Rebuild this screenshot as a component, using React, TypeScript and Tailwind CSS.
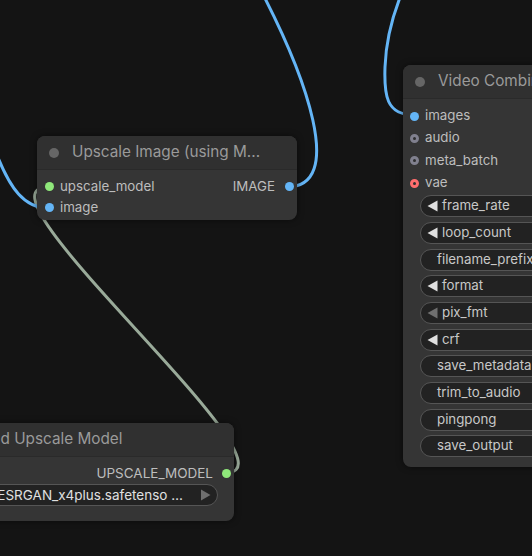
import React from "react";

type Slot = { name: string; color: string; hollow?: boolean };

const Dot: React.FC<{ color: string; hollow?: boolean }> = ({ color, hollow }) =>
  hollow ? (
    <span
      className="block w-[9px] h-[9px] rounded-full border-[3px] bg-[#2e2e30]"
      style={{ borderColor: color }}
    />
  ) : (
    <span className="block w-[9px] h-[9px] rounded-full" style={{ background: color }} />
  );

const Arrow: React.FC<{ dim?: boolean; right?: boolean }> = ({ dim, right }) => (
  <svg width="11" height="12" viewBox="0 0 11 12" className="shrink-0">
    <path
      d={right ? "M1 0.5 L10.5 6 L1 11.5 Z" : "M10.5 0.5 L0.5 6 L10.5 11.5 Z"}
      fill={dim ? "#6f6f6f" : "#e0e0e0"}
    />
  </svg>
);

const Title: React.FC<{ text: string }> = ({ text }) => (
  <div className="h-[34px] flex items-center pl-[12px] gap-[13px] bg-[#303030] border-b border-[#2a2a2a] rounded-t-[8px]">
    <span className="w-[10px] h-[10px] rounded-full bg-[#666] shrink-0" />
    <span className="text-[15.3px] text-[#9a9a9a] whitespace-nowrap">{text}</span>
  </div>
);

const Widget: React.FC<{ label: string; arrow?: "on" | "dim" }> = ({ label, arrow }) => (
  <div
    className={`h-[22px] rounded-full border border-[#555] bg-[#222] flex items-center gap-[4px] text-[13.3px] text-[#c8c8c8] whitespace-nowrap ${
      arrow ? "pl-[6px]" : "pl-[16px]"
    }`}
  >
    {arrow && <Arrow dim={arrow === "dim"} />}
    <span>{label}</span>
  </div>
);

const inputs: Slot[] = [
  { name: "images", color: "#64b5f6" },
  { name: "audio", color: "#80808e", hollow: true },
  { name: "meta_batch", color: "#80808e", hollow: true },
  { name: "vae", color: "#ff6e6e", hollow: true },
];

const widgets: { label: string; arrow?: "on" | "dim" }[] = [
  { label: "frame_rate", arrow: "on" },
  { label: "loop_count", arrow: "on" },
  { label: "filename_prefix" },
  { label: "format", arrow: "on" },
  { label: "pix_fmt", arrow: "dim" },
  { label: "crf", arrow: "on" },
  { label: "save_metadata" },
  { label: "trim_to_audio" },
  { label: "pingpong" },
  { label: "save_output" },
];

export default function App() {
  return (
    <div
      className="relative w-[532px] h-[556px] overflow-hidden bg-[#141414]"
      style={{ fontFamily: "Inter, 'Noto Sans', sans-serif" }}
    >
      {/* links sit under the nodes */}
      <svg className="absolute inset-0" width="532" height="556" fill="none">
        <path d="M225 473 C309 473, -36 187, 48 187" stroke="#99aa99" strokeWidth="3" />
        <path d="M287 187 C345 187, 310 80, 250 -30" stroke="#64b5f6" strokeWidth="3" />
        <path d="M414 115 C386 115, 384 95, 385 67 C386 40, 393 15, 401 -5" stroke="#64b5f6" strokeWidth="3" />
        <path d="M48 208 C25 208, 10 190, -5 150" stroke="#64b5f6" strokeWidth="3" />
      </svg>

      {/* Upscale Image (using Model) */}
      <div className="absolute left-[37px] top-[136px] w-[260px] h-[84px] rounded-[8px] bg-[#353535] shadow-[0_0_6px_rgba(0,0,0,0.5)]">
        <Title text="Upscale Image (using M..." />
        <div className="relative pt-[6px] text-[13.3px] text-[#bdbdbd]">
          <div className="h-[21px] flex items-center">
            <span className="w-[23px] flex justify-center pl-[1px]">
              <Dot color="#8fe87a" />
            </span>
            <span>upscale_model</span>
            <span className="ml-auto mr-[6px]">IMAGE</span>
            <span className="w-[16px] flex justify-center">
              <Dot color="#64b5f6" />
            </span>
          </div>
          <div className="h-[21px] flex items-center">
            <span className="w-[23px] flex justify-center pl-[1px]">
              <Dot color="#64b5f6" />
            </span>
            <span>image</span>
          </div>
        </div>
      </div>

      {/* Video Combine */}
      <div className="absolute left-[403px] top-[65px] w-[300px] h-[402px] rounded-[8px] bg-[#353535] shadow-[0_0_6px_rgba(0,0,0,0.5)]">
        <Title text="Video Combine 🎥🅥🅗🅢" />
        <div className="pt-[6px] text-[13.3px] text-[#bdbdbd]">
          {inputs.map((s) => (
            <div key={s.name} className="h-[22.3px] flex items-center">
              <span className="w-[22px] flex justify-center">
                <Dot color={s.color} hollow={s.hollow} />
              </span>
              <span>{s.name}</span>
            </div>
          ))}
        </div>
        <div className="flex flex-col gap-[4.7px] pl-[17px] pr-[15px] pt-[1px]">
          {widgets.map((w) => (
            <Widget key={w.label} label={w.label} arrow={w.arrow} />
          ))}
        </div>
      </div>

      {/* Load Upscale Model */}
      <div className="absolute left-[-61px] top-[423px] w-[295px] h-[98px] rounded-[8px] bg-[#353535] shadow-[0_0_6px_rgba(0,0,0,0.5)]">
        <Title text="Load Upscale Model" />
        <div className="pt-[6px] text-[13.5px] text-[#bdbdbd]">
          <div className="h-[21px] flex items-center justify-end">
            <span className="mr-[6px]">UPSCALE_MODEL</span>
            <span className="w-[15px] flex justify-center">
              <Dot color="#8fe87a" />
            </span>
          </div>
          <div className="ml-[16px] mr-[16px] h-[22px] rounded-full border border-[#555] bg-[#222] flex items-center pl-[8px] pr-[6px] text-[13.5px] text-[#e0e0e0] whitespace-nowrap">
            <Arrow dim />
            <span className="ml-[-5px]">RealESRGAN_x4plus.safetenso …</span>
            <span className="ml-auto">
              <Arrow dim right />
            </span>
          </div>
        </div>
      </div>
    </div>
  );
}
